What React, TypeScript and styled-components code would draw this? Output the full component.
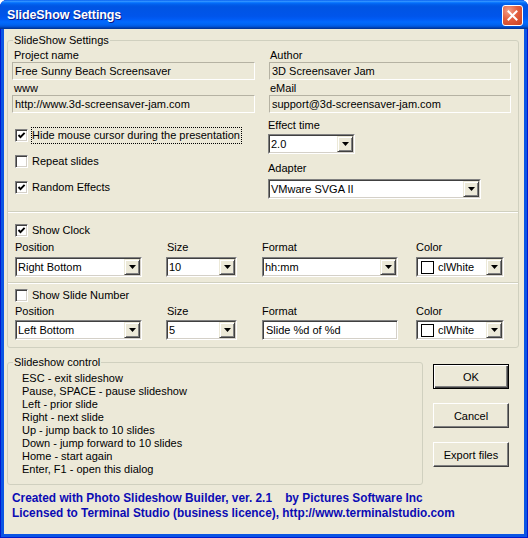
import React from 'react';
import styled, { createGlobalStyle, css } from 'styled-components';

const Global = createGlobalStyle`
  html, body { margin: 0; padding: 0; background: #ffffff; }
  body { font-family: "Liberation Sans", Arial, sans-serif; font-size: 11px; color: #000; }
  * { box-sizing: border-box; }
`;

const Window = styled.div`
  width: 528px;
  height: 538px;
  display: flex;
  flex-direction: column;
  background: #0a55e4;
  box-shadow: inset 1px 0 0 #0019cf, inset -1px 0 0 #0019cf, inset 0 -1px 0 #0019cf;
  border-radius: 7px 7px 0 0;
  overflow: hidden;
`;

const TitleBar = styled.div`
  height: 29px;
  flex: none;
  display: flex;
  align-items: center;
  justify-content: space-between;
  padding: 0 5px 0 7px;
  background: linear-gradient(
    to bottom,
    #0058ee 0%, #3593ff 4%, #288eff 6%, #127dff 8%, #036ffc 10%, #0262ee 14%,
    #0057e5 20%, #0054e3 24%, #0055eb 56%, #005bf5 66%, #026afe 76%,
    #0062ef 86%, #0052d6 92%, #0040ab 96%, #003092 100%
  );
`;

const TitleText = styled.span`
  color: #ffffff;
  font-family: "Liberation Sans", Arial, sans-serif;
  font-weight: bold;
  font-size: 12.5px;
  letter-spacing: -0.1px;
  text-shadow: 1px 1px 0 #0a1883;
  margin-top: 1px;
`;

const CloseButton = styled.div`
  width: 21px;
  height: 21px;
  margin-top: 2px;
  border: 1px solid #ffffff;
  border-radius: 3px;
  background: radial-gradient(circle at 30% 25%, #f3a08a 0%, #e35f3f 45%, #c8401f 100%);
  display: flex;
  align-items: center;
  justify-content: center;
`;

const Client = styled.div`
  flex: 1;
  margin: 0 4px 4px 4px;
  background: #ece9d8;
  padding: 5px 0 0 3px;
  display: flex;
  flex-direction: column;
`;

const Group = styled.fieldset<{ $w: number }>`
  margin: 0;
  padding: 0;
  min-width: 0;
  width: ${p => p.$w}px;
  border: 1px solid #d0d0bf;
  border-radius: 3px;
`;

const Legend = styled.legend`
  margin-left: 5px;
  padding: 0 1px;
  font-size: 11px;
  line-height: 13px;
  color: #000;
`;

const TopSection = styled.div`
  display: grid;
  grid-template-columns: 243px 243px;
  column-gap: 13px;
  padding: 2px 7px 12px 4px;
`;

const Column = styled.div`
  display: flex;
  flex-direction: column;
  align-items: flex-start;
`;

const FieldLabel = styled.div<{ $top?: number; $pad?: number }>`
  line-height: 13px;
  height: 13px;
  margin-top: ${p => p.$top ?? 0}px;
  padding-left: ${p => p.$pad ?? 2}px;
  white-space: nowrap;
`;

const ReadBox = styled.div<{ $w: number; $left?: number }>`
  width: ${p => p.$w}px;
  height: 18px;
  margin-left: ${p => p.$left ?? 0}px;
  margin-bottom: 2px;
  line-height: 16px;
  padding-left: 2px;
  background: #ece9d8;
  border: 1px solid;
  border-color: #b5b2a3 #ffffff #ffffff #b5b2a3;
  white-space: nowrap;
  overflow: hidden;
`;

const ComboFrame = styled.div<{ $w: number; $top?: number }>`
  width: ${p => p.$w}px;
  height: 20px;
  margin-top: ${p => p.$top ?? 0}px;
  border: 1px solid;
  border-color: #808080 #ffffff #ffffff #808080;
  flex: none;
`;

const ComboInner = styled.div`
  height: 100%;
  display: flex;
  align-items: center;
  background: #ffffff;
  border: 1px solid;
  border-color: #404040 #d4d0c8 #d4d0c8 #404040;
`;

const ComboValue = styled.div`
  flex: 1;
  padding-left: 1px;
  line-height: 16px;
  white-space: nowrap;
  overflow: hidden;
  display: flex;
  align-items: center;
`;

const DropButton = styled.div`
  width: 16px;
  height: 16px;
  flex: none;
  background: #ece9d8;
  border: 1px solid;
  border-color: #ece9d8 #404040 #404040 #ece9d8;
  box-shadow: inset 1px 1px 0 #ffffff, inset -1px -1px 0 #808080;
  display: flex;
  align-items: center;
  justify-content: center;
`;

const Swatch = styled.span`
  width: 13px;
  height: 13px;
  border: 1px solid #000;
  background: #fff;
  margin: 0 4px 0 2px;
  flex: none;
`;

const CheckRow = styled.div<{ $top?: number; $span?: boolean }>`
  display: flex;
  align-items: center;
  height: 17px;
  margin-top: ${p => p.$top ?? 0}px;
  padding-left: ${p => (p.$span ? 0 : 3)}px;
  ${p => p.$span && css`grid-column: 1 / -1;`}
`;

const CheckBox = styled.span`
  width: 13px;
  height: 13px;
  flex: none;
  background: #ffffff;
  border: 1px solid;
  border-color: #808080 #ffffff #ffffff #808080;
  box-shadow: inset 1px 1px 0 #404040, inset -1px -1px 0 #d4d0c8;
  display: flex;
  align-items: center;
  justify-content: center;
  margin-right: 3px;
`;

const CheckText = styled.span<{ $focus?: boolean }>`
  line-height: 15px;
  padding: 0 1px 0 0;
  border: 1px dotted ${p => (p.$focus ? '#000' : 'transparent')};
  white-space: nowrap;
`;

const OptionSection = styled.div<{ $top: number; $bottom: number }>`
  display: grid;
  grid-template-columns: 151px 96px 154px 88px;
  padding: ${p => p.$top}px 0 ${p => p.$bottom}px 7px;
  border-top: 1px solid #d0d0bf;
  box-shadow: inset 0 1px 0 #ffffff;
`;

const Cell = styled.div`
  display: flex;
  flex-direction: column;
  align-items: flex-start;
`;

const EditBox = styled.div<{ $w: number; $top?: number }>`
  width: ${p => p.$w}px;
  height: 20px;
  margin-top: ${p => p.$top ?? 0}px;
  border: 1px solid;
  border-color: #808080 #ffffff #ffffff #808080;
  box-shadow: inset 1px 1px 0 #404040, inset -1px -1px 0 #d4d0c8;
  background: #fff;
  padding-left: 3px;
  line-height: 18px;
  white-space: nowrap;
`;

const BottomRow = styled.div`
  display: flex;
  align-items: flex-start;
  margin-top: 8px;
`;

const KeyList = styled.div`
  padding: 3px 0 8px 14px;
`;

const KeyLine = styled.div`
  line-height: 13px;
  white-space: nowrap;
`;

const ButtonColumn = styled.div`
  display: flex;
  flex-direction: column;
  gap: 14px;
  margin: 8px 0 0 10px;
`;

const Button = styled.button<{ $default?: boolean }>`
  width: 76px;
  height: 25px;
  margin: 0;
  padding: 0;
  font-family: "Liberation Sans", Arial, sans-serif;
  font-size: 11px;
  color: #000;
  background: #ece9d8;
  border: 1px solid;
  border-color: #ffffff #404040 #404040 #ffffff;
  box-shadow: inset -1px -1px 0 #808080;
  ${p =>
    p.$default &&
    css`
      border-color: #000;
      box-shadow: inset 1px 1px 0 #ffffff, inset -1px -1px 0 #404040, inset -2px -2px 0 #808080;
    `}
`;

const Footer = styled.div`
  margin-top: 6px;
  padding-left: 5px;
  color: #0b0bb4;
  font-weight: bold;
  font-size: 11.85px;
  font-family: "Liberation Sans", Arial, sans-serif;
`;

const FooterLine = styled.div`
  line-height: 15px;
  white-space: pre;
`;

const Arrow = () => (
  <svg width="7" height="4" viewBox="0 0 7 4">
    <polygon points="0,0 7,0 3.5,4" fill="#000" />
  </svg>
);

const Check = () => (
  <svg width="9" height="9" viewBox="0 0 9 9">
    <polyline points="1.5,4 3.5,6.2 7.6,1.8" fill="none" stroke="#000" strokeWidth="1.9" />
  </svg>
);

const Combo: React.FC<{ w: number; top?: number; children?: React.ReactNode }> = ({ w, top, children }) => (
  <ComboFrame $w={w} $top={top}>
    <ComboInner>
      <ComboValue>{children}</ComboValue>
      <DropButton>
        <Arrow />
      </DropButton>
    </ComboInner>
  </ComboFrame>
);

const Option: React.FC<{ checked?: boolean; focus?: boolean; top?: number; span?: boolean; children: React.ReactNode }> = ({
  checked,
  focus,
  top,
  span,
  children,
}) => (
  <CheckRow $top={top} $span={span}>
    <CheckBox>{checked && <Check />}</CheckBox>
    <CheckText $focus={focus}>{children}</CheckText>
  </CheckRow>
);

type Row = {
  checked: boolean;
  title: string;
  position: string;
  size: string;
  format: string;
  editFormat: boolean;
  top: number;
  bottom: number;
  labelTop: number;
  comboTop: number;
};

const rows: Row[] = [
  { checked: true, title: 'Show Clock', position: 'Right Bottom', size: '10', format: 'hh:mm', editFormat: false, top: 10, bottom: 5, labelTop: 2, comboTop: 3 },
  { checked: false, title: 'Show Slide Number', position: 'Left Bottom', size: '5', format: 'Slide %d of %d', editFormat: true, top: 4, bottom: 7, labelTop: 1, comboTop: 2 },
];

const keys = [
  'ESC - exit slideshow',
  'Pause, SPACE - pause slideshow',
  'Left - prior slide',
  'Right - next slide',
  'Up - jump back to 10 slides',
  'Down - jump forward to 10 slides',
  'Home - start again',
  'Enter, F1 - open this dialog',
];

export default function App() {
  return (
    <>
      <Global />
      <Window>
        <TitleBar>
          <TitleText>SlideShow Settings</TitleText>
          <CloseButton>
            <svg width="11" height="11" viewBox="0 0 11 11">
              <path d="M1.5 1.5 L9.5 9.5 M9.5 1.5 L1.5 9.5" stroke="#fff" strokeWidth="2" strokeLinecap="square" />
            </svg>
          </CloseButton>
        </TitleBar>
        <Client>
          <Group $w={512}>
            <Legend>SlideShow Settings</Legend>
            <TopSection>
              <Column>
                <FieldLabel>Project name</FieldLabel>
                <ReadBox $w={243}>Free Sunny Beach Screensaver</ReadBox>
                <FieldLabel>www</FieldLabel>
                <ReadBox $w={243}>http://www.3d-screensaver-jam.com</ReadBox>
                <Option checked focus top={12}>
                  Hide mouse cursor during the presentation
                </Option>
                <Option top={9}>Repeat slides</Option>
                <Option checked top={9}>
                  Random Effects
                </Option>
              </Column>
              <Column>
                <FieldLabel $pad={2}>Author</FieldLabel>
                <ReadBox $w={242} $left={1}>3D Screensaver Jam</ReadBox>
                <FieldLabel $pad={2}>eMail</FieldLabel>
                <ReadBox $w={242} $left={1}>support@3d-screensaver-jam.com</ReadBox>
                <FieldLabel $top={4} $pad={0}>
                  Effect time
                </FieldLabel>
                <Combo w={87} top={2}>
                  2.0
                </Combo>
                <FieldLabel $top={8} $pad={0}>
                  Adapter
                </FieldLabel>
                <Combo w={213} top={4}>
                  VMware SVGA II
                </Combo>
              </Column>
            </TopSection>
            {rows.map(r => (
              <OptionSection key={r.title} $top={r.top} $bottom={r.bottom}>
                <Option checked={r.checked} span>
                  {r.title}
                </Option>
                <Cell>
                  <FieldLabel $top={r.labelTop} $pad={0}>
                    Position
                  </FieldLabel>
                  <Combo w={127} top={r.comboTop}>
                    {r.position}
                  </Combo>
                </Cell>
                <Cell>
                  <FieldLabel $top={r.labelTop} $pad={1}>
                    Size
                  </FieldLabel>
                  <Combo w={71} top={r.comboTop}>
                    {r.size}
                  </Combo>
                </Cell>
                <Cell>
                  <FieldLabel $top={r.labelTop} $pad={0}>
                    Format
                  </FieldLabel>
                  {r.editFormat ? (
                    <EditBox $w={136} $top={r.comboTop}>
                      {r.format}
                    </EditBox>
                  ) : (
                    <Combo w={136} top={r.comboTop}>
                      {r.format}
                    </Combo>
                  )}
                </Cell>
                <Cell>
                  <FieldLabel $top={r.labelTop} $pad={0}>
                    Color
                  </FieldLabel>
                  <Combo w={88} top={r.comboTop}>
                    <Swatch />
                    clWhite
                  </Combo>
                </Cell>
              </OptionSection>
            ))}
          </Group>
          <BottomRow>
            <Group $w={416}>
              <Legend>Slideshow control</Legend>
              <KeyList>
                {keys.map(k => (
                  <KeyLine key={k}>{k}</KeyLine>
                ))}
              </KeyList>
            </Group>
            <ButtonColumn>
              <Button $default>OK</Button>
              <Button>Cancel</Button>
              <Button>Export files</Button>
            </ButtonColumn>
          </BottomRow>
          <Footer>
            <FooterLine>{'Created with Photo Slideshow Builder, ver. 2.1    by Pictures Software Inc'}</FooterLine>
            <FooterLine>Licensed to Terminal Studio (business licence), http://www.terminalstudio.com</FooterLine>
          </Footer>
        </Client>
      </Window>
    </>
  );
}
